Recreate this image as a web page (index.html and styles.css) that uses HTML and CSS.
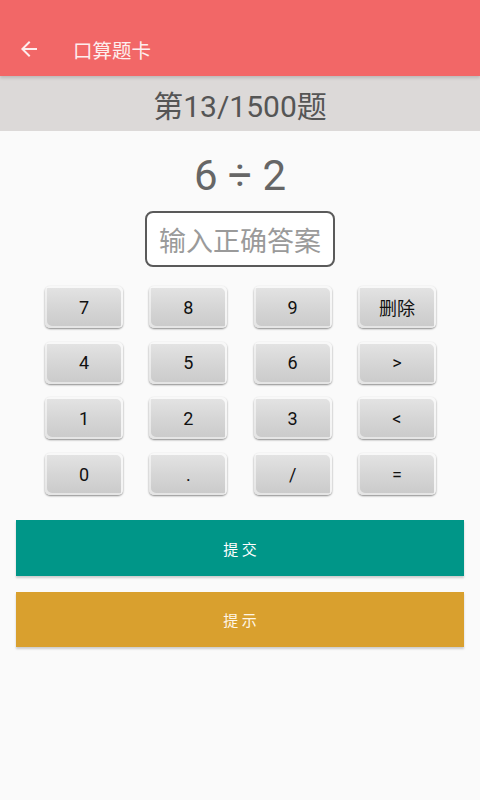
FILE: index.html
```html
<!DOCTYPE html>
<html lang="zh">
<head>
<meta charset="utf-8">
<link rel="stylesheet" href="styles.css">
</head>
<body>
<header class="appbar">
  <svg class="back" width="24" height="24" viewBox="0 0 24 24"><path d="M20 11H7.83l5.59-5.59L12 4l-8 8 8 8 1.41-1.41L7.83 13H20v-2z" fill="#fdeeee"/></svg>
  <span class="apptitle">口算题卡</span>
</header>
<div class="progress">第13/1500题</div>
<main class="content">
  <div class="equation">6 ÷ 2</div>
  <div class="answer">输入正确答案</div>
  <div class="keypad">
    <div class="key">7</div><div class="key">8</div><div class="key">9</div><div class="key cjk">删除</div>
    <div class="key">4</div><div class="key">5</div><div class="key">6</div><div class="key">&gt;</div>
    <div class="key">1</div><div class="key">2</div><div class="key">3</div><div class="key">&lt;</div>
    <div class="key">0</div><div class="key">.</div><div class="key">/</div><div class="key">=</div>
  </div>
  <div class="action submit">提 交</div>
  <div class="action hint">提 示</div>
</main>
</body>
</html>
```
FILE: styles.css
```css
* { box-sizing: border-box; }
html, body { margin: 0; padding: 0; }
body {
  width: 480px;
  height: 800px;
  background: #fafafa;
  font-family: Roboto, "Noto Sans", "Noto Sans CJK SC", sans-serif;
  overflow: hidden;
}
.appbar {
  height: 76px;
  background: #f26767;
  display: flex;
  align-items: center;
  padding: 22px 0 0 17px;
  box-shadow: 0 2px 3px rgba(0,0,0,0.15);
  position: relative;
  z-index: 1;
}
.back { flex: none; }
.apptitle {
  margin-left: 32px;
  color: #fdeeee;
  font-size: 19.5px;
  font-family: "Noto Sans CJK SC", sans-serif;
}
.progress {
  height: 55px;
  background: #dcd9d8;
  display: flex;
  align-items: center;
  justify-content: center;
  color: #555;
  font-size: 30px;
  font-family: Roboto, "Noto Sans CJK SC", sans-serif;
}
.content {
  display: flex;
  flex-direction: column;
  align-items: center;
}
.equation {
  margin-top: 21px;
  height: 48px;
  line-height: 48px;
  font-size: 42px;
  color: #666;
}
.answer {
  margin-top: 11px;
  width: 190px;
  height: 56px;
  border: 2px solid #5a5a5a;
  border-radius: 8px;
  background: #fff;
  display: flex;
  align-items: center;
  justify-content: center;
  color: #9a9a9a;
  font-size: 27px;
  font-family: "Noto Sans CJK SC", sans-serif;
}
.keypad {
  margin-top: 19px;
  display: grid;
  grid-template-columns: repeat(4, 78px);
  grid-auto-rows: 42px;
  column-gap: 26.3px;
  row-gap: 13.7px;
  margin-left: 1px;
}
.key {
  border-radius: 5px;
  background: linear-gradient(180deg, #e4e4e4 0%, #d6d6d6 50%, #cacaca 100%);
  box-shadow:
    inset -2px 2px 0 rgba(255,255,255,0.75),
    inset 2px -2px 0 rgba(255,255,255,0.5),
    0 1px 2px rgba(0,0,0,0.45);
  display: flex;
  align-items: center;
  justify-content: center;
  color: #111;
  font-size: 18px;
}
.key.cjk { font-family: "Noto Sans CJK SC", sans-serif; font-size: 18px; }
.action {
  width: 448px;
  height: 56px;
  display: flex;
  align-items: center;
  justify-content: center;
  color: #fff;
  font-size: 15px;
  font-family: "Noto Sans CJK SC", sans-serif;
  box-shadow: 0 2px 2px rgba(0,0,0,0.18);
}
.submit { margin-top: 25px; background: #009688; }
.hint { margin-top: 16px; height: 55px; background: #d9a02e; color: #fff6e6; }
```
